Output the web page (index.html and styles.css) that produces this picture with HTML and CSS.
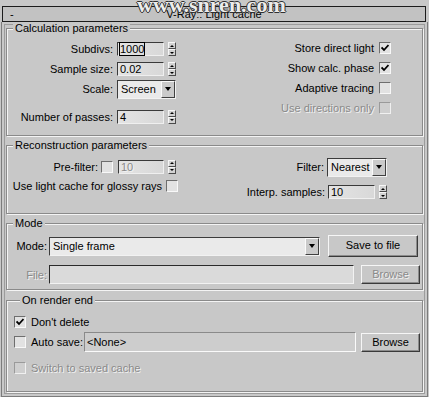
FILE: index.html
```html
<!DOCTYPE html>
<html lang="en">
<head>
    <meta charset="UTF-8">
    <title>V-Ray:: Light cache</title>
    <link rel="stylesheet" href="styles.css">
</head>
<body>
    <div class="rollout">
        <div class="rollout-title">
            <span class="toggle">-</span>
            <span class="title-text">V-Ray:: Light cache</span>
            <span></span>
        </div>

        <div class="rollout-body">
            <!-- Calculation parameters -->
            <fieldset class="group group-calc">
                <legend>Calculation parameters</legend>
                <div class="calc-cols">
                    <div class="param-grid">
                        <span class="lbl">Subdivs:</span>
                        <span class="ctrl"><span class="field"><span class="sel">1000</span></span><span class="spinner"><i></i><i></i></span></span>
                        <span class="lbl">Sample size:</span>
                        <span class="ctrl"><span class="field">0.02</span><span class="spinner"><i></i><i></i></span></span>
                        <span class="lbl">Scale:</span>
                        <span class="ctrl"><span class="combo combo-scale"><span class="combo-text">Screen</span><span class="combo-btn"></span></span></span>
                        <span class="lbl">Number of passes:</span>
                        <span class="ctrl"><span class="field">4</span><span class="spinner"><i></i><i></i></span></span>
                    </div>
                    <div class="check-col">
                        <div class="check-row"><span>Store direct light</span><span class="check"><svg width="8" height="8" viewBox="0 0 8 8"><path d="M0.5 3.5 L3 6 L7.5 1" fill="none" stroke="#000" stroke-width="1.8"/></svg></span></div>
                        <div class="check-row"><span>Show calc. phase</span><span class="check"><svg width="8" height="8" viewBox="0 0 8 8"><path d="M0.5 3.5 L3 6 L7.5 1" fill="none" stroke="#000" stroke-width="1.8"/></svg></span></div>
                        <div class="check-row"><span>Adaptive tracing</span><span class="check"></span></div>
                        <div class="check-row disabled"><span>Use directions only</span><span class="check off"></span></div>
                    </div>
                </div>
            </fieldset>

            <!-- Reconstruction parameters -->
            <fieldset class="group group-recon">
                <legend>Reconstruction parameters</legend>
                <div class="recon-cols">
                    <div class="recon-left">
                        <div class="recon-row">
                            <span>Pre-filter:</span>
                            <span class="check"></span>
                            <span class="field field-recon disabled">10</span>
                            <span class="spinner"><i></i><i></i></span>
                        </div>
                        <div class="recon-row glossy">
                            <span>Use light cache for glossy rays</span>
                            <span class="check"></span>
                        </div>
                    </div>
                    <div class="recon-right">
                        <div class="recon-row">
                            <span>Filter:</span>
                            <span class="combo combo-filter"><span class="combo-text">Nearest</span><span class="combo-btn"></span></span>
                        </div>
                        <div class="recon-row interp">
                            <span>Interp. samples:</span>
                            <span class="field">10</span>
                            <span class="spinner"><i></i><i></i></span>
                        </div>
                    </div>
                </div>
            </fieldset>

            <!-- Mode -->
            <fieldset class="group group-mode">
                <legend>Mode</legend>
                <div class="mode-row">
                    <span class="mode-lbl">Mode:</span>
                    <span class="combo combo-mode"><span class="combo-text">Single frame</span><span class="combo-btn"></span></span>
                    <span class="btn btn-save">Save to file</span>
                </div>
                <div class="mode-row file-row">
                    <span class="mode-lbl disabled">File:</span>
                    <span class="text-field"></span>
                    <span class="btn btn-browse disabled">Browse</span>
                </div>
            </fieldset>

            <!-- On render end -->
            <fieldset class="group group-end">
                <legend>On render end</legend>
                <div class="end-row">
                    <span class="check"><svg width="8" height="8" viewBox="0 0 8 8"><path d="M0.5 3.5 L3 6 L7.5 1" fill="none" stroke="#000" stroke-width="1.8"/></svg></span>
                    <span>Don't delete</span>
                </div>
                <div class="end-row autosave">
                    <span class="check"></span>
                    <span>Auto save:</span>
                    <span class="save-field">&lt;None&gt;</span>
                    <span class="btn btn-browse">Browse</span>
                </div>
                <div class="end-row switch disabled">
                    <span class="check off"></span>
                    <span>Switch to saved cache</span>
                </div>
            </fieldset>
        </div>
    </div>

    <div class="watermark">www.snren.com</div>
</body>
</html>
```

FILE: styles.css
```css
/* page */
body {
    margin: 0;
    width: 429px;
    height: 397px;
    overflow: hidden;
    position: relative;
    background-color: #c8c8c8;
    color: #000;
    font-family: "Liberation Sans", Arial, sans-serif;
    font-size: 11px;
}

.disabled,
.disabled span {
    color: #8a8a8a;
    text-shadow: 1px 1px 0 #f2f2f2;
}

/* rollout header */
.rollout-title {
    box-sizing: border-box;
    margin: 6px 3px 0 2px;
    height: 16px;
    border: 1px solid #1c1c1c;
    background-color: #c2c2c2;
    display: grid;
    grid-template-columns: 1fr auto 1fr;
    align-items: center;
    line-height: 13px;
}

.toggle {
    padding-left: 7px;
}

/* rollout frame */
.rollout-body {
    box-sizing: border-box;
    margin-left: 1px;
    width: 427px;
    height: 375px;
    border: 1px solid #7c7c7c;
    border-top: none;
    box-shadow: inset 0 0 0 2px #c8c8c8, inset 0 0 0 3px #9c9c9c;
    padding: 0 4px;
}

/* group boxes */
.group {
    margin: 0;
    padding: 0;
    min-width: 0;
    border: 1px solid #8a8a8a;
    box-shadow: inset 1px 1px 0 #f4f4f4, 1px 1px 0 #f4f4f4;
}

.group legend {
    margin-left: 6px;
    padding: 0 2px;
    line-height: 12px;
    background-color: #c8c8c8;
}

.group-calc { padding: 5px 0 1px; }
.group-recon { margin-top: 3px; padding: 6px 0 11px; }
.group-mode { margin-top: 3px; padding: 6px 0 5px; }
.group-end { margin-top: 4px; padding: 6px 0 14px; }

/* common controls */
.field {
    box-sizing: border-box;
    width: 47px;
    height: 14px;
    padding-left: 2px;
    line-height: 12px;
    background: linear-gradient(to right, #e4e4e4, #d8d8d8);
    border: 1px solid;
    border-color: #3a3a3a #efefef #efefef #3a3a3a;
}

.sel {
    outline: 1px solid #000;
}

.spinner {
    display: flex;
    flex-direction: column;
    width: 8px;
    height: 14px;
    margin-left: 4px;
}

.spinner i {
    flex: 1;
    box-sizing: border-box;
    display: flex;
    align-items: center;
    justify-content: center;
    background-color: #d2d2d2;
    border: 1px solid;
    border-color: #f6f6f6 #4a4a4a #4a4a4a #f6f6f6;
}

.spinner i::before {
    content: "";
    border-left: 2px solid transparent;
    border-right: 2px solid transparent;
    border-bottom: 2px solid #000;
}

.spinner i + i::before {
    border-bottom: none;
    border-top: 2px solid #000;
}

.combo {
    box-sizing: border-box;
    height: 19px;
    display: flex;
    background-color: #eaeaea;
    border: 1px solid;
    border-color: #3c3c3c #f2f2f2 #f2f2f2 #3c3c3c;
}

.combo-text {
    flex: 1;
    padding-left: 3px;
    line-height: 17px;
}

.combo-btn {
    box-sizing: border-box;
    width: 14px;
    display: flex;
    align-items: center;
    justify-content: center;
    background-color: #cacaca;
    border: 1px solid;
    border-color: #fafafa #404040 #404040 #fafafa;
}

.combo-btn::before {
    content: "";
    border-left: 3px solid transparent;
    border-right: 3px solid transparent;
    border-top: 4px solid #000;
}

.combo-scale { width: 59px; }
.combo-filter { width: 60px; }
.combo-mode { width: 271px; }

.check {
    box-sizing: border-box;
    flex: none;
    width: 12px;
    height: 12px;
    display: flex;
    align-items: center;
    justify-content: center;
    background-color: #e2e2e2;
    border: 1px solid;
    border-color: #6e6e6e #f8f8f8 #f8f8f8 #6e6e6e;
}

.check.off {
    background-color: #cfcfcf;
    border-color: #9a9a9a #f0f0f0 #f0f0f0 #9a9a9a;
}

.btn {
    box-sizing: border-box;
    height: 22px;
    text-align: center;
    line-height: 19px;
    background-color: #c8c8c8;
    border: 1px solid;
    border-color: #f6f6f6 #3a3a3a #3a3a3a #f6f6f6;
    box-shadow: inset -1px -1px 0 #8c8c8c;
}

/* calculation parameters */
.calc-cols {
    display: flex;
    justify-content: space-between;
}

.param-grid {
    display: grid;
    grid-template-columns: 106px auto;
    grid-template-rows: 20px 20px 20px 35px;
    column-gap: 4px;
    align-items: center;
}

.lbl {
    text-align: right;
}

.ctrl {
    display: flex;
    align-items: center;
}

.check-col {
    margin: -1px 31px 0 0;
}

.check-row {
    height: 20px;
    display: flex;
    align-items: center;
    justify-content: flex-end;
    gap: 5px;
}

/* reconstruction parameters */
.recon-cols {
    display: flex;
    justify-content: space-between;
}

.recon-left {
    width: 169px;
}

.recon-row {
    height: 19px;
    display: flex;
    align-items: center;
    justify-content: flex-end;
}

.recon-row .check {
    margin-left: 3px;
}

.field-recon {
    width: 46px;
    margin-left: 5px;
}

.recon-row.glossy {
    margin-right: -2px;
}

.recon-row.glossy .check {
    margin-left: 4px;
}

.recon-right {
    margin-right: 35px;
}

.recon-right .recon-row {
    height: 20px;
}

.recon-right .combo {
    margin-left: 3px;
}

.recon-row.interp {
    margin-top: 5px;
}

.recon-row.interp .field {
    margin-left: 3px;
}

/* mode */
.mode-row {
    height: 22px;
    display: flex;
    align-items: center;
    margin-right: 2px;
}

.mode-lbl {
    width: 40px;
    margin-right: 2px;
    text-align: right;
}

.btn-save {
    width: 90px;
    margin-left: 8px;
}

.file-row {
    height: 19px;
    margin-top: 8px;
}

.text-field {
    box-sizing: border-box;
    width: 305px;
    height: 19px;
    background-color: #dadada;
    border: 1px solid;
    border-color: #2a2a2a #f2f2f2 #f2f2f2 #2a2a2a;
}

.btn-browse {
    width: 59px;
    height: 19px;
    line-height: 16px;
    margin-left: auto;
}

/* on render end */
.group-end {
    padding-left: 7px;
}

.end-row {
    height: 19px;
    display: flex;
    align-items: center;
    gap: 5px;
    margin-right: 2px;
}

.end-row.autosave {
    height: 20px;
    margin-top: 1px;
    gap: 0;
}

.autosave > span:nth-child(2) {
    margin-left: 5px;
    width: 53px;
}

.save-field {
    box-sizing: border-box;
    width: 272px;
    height: 20px;
    padding-left: 2px;
    line-height: 18px;
    background-color: #cdcdcd;
    border: 1px solid;
    border-color: #8a8a8a #fafafa #fafafa #8a8a8a;
}

.end-row.switch {
    margin-top: 6px;
}

/* watermark over the title bar */
.watermark {
    position: absolute;
    top: -6px;
    left: 137px;
    font-family: "Liberation Serif", serif;
    font-weight: bold;
    font-size: 22px;
    line-height: 22px;
    color: #ececec;
    text-shadow: 1px 0 0 #303030, -1px 0 0 #303030, 0 1px 0 #303030, 0 -1px 0 #303030;
}
```
